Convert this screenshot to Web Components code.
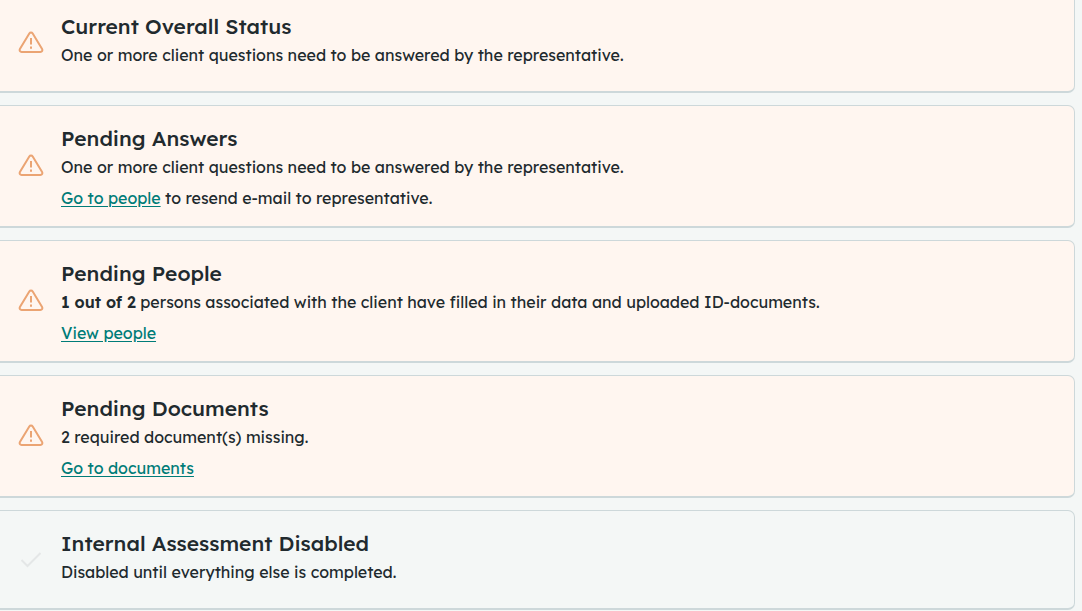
<!DOCTYPE html>
<html lang="en">
<head>
<meta charset="utf-8">
<meta name="viewport" content="width=device-width, initial-scale=1">
<title>Client status</title>
<style>
    body {
        margin: 0;
        background-color: #f4f7f6;
        color: #212a2e;
        font-family: Lexend, Inter, sans-serif;
        font-size: 16px;
        overflow: hidden;
    }
</style>
</head>
<body>
<status-list>
    <status-card heading="Current Overall Status" state="warning">
        <status-text>One or more client questions need to be answered by the representative.</status-text>
    </status-card>
    <status-card heading="Pending Answers" state="warning">
        <status-text>One or more client questions need to be answered by the representative.</status-text>
        <status-text><status-link href="#people">Go to people</status-link> to resend e-mail to representative.</status-text>
    </status-card>
    <status-card heading="Pending People" state="warning">
        <status-text><b>1 out of 2</b> persons associated with the client have filled in their data and uploaded ID-documents.</status-text>
        <status-text><status-link href="#people">View people</status-link></status-text>
    </status-card>
    <status-card heading="Pending Documents" state="warning">
        <status-text>2 required document(s) missing.</status-text>
        <status-text><status-link href="#documents">Go to documents</status-link></status-text>
    </status-card>
    <status-card heading="Internal Assessment Disabled" state="disabled">
        <status-text>Disabled until everything else is completed.</status-text>
    </status-card>
</status-list>
<script>
const ICONS = {
    warning: `
        <svg width="26" height="26" viewBox="0 0 26 26" fill="none" stroke="#eba473" stroke-width="2" stroke-linejoin="round" aria-hidden="true">
            <path d="M11.3 2.500 1.900 18c-.8 1.400.1 3 1.700 3h18.800c1.600 0 2.500-1.600 1.700-3L14.700 2.500c-.8-1.300-2.600-1.300-3.400 0z"/>
            <path d="M13 7v6.500M13 15.500v2.300"/>
        </svg>`,
    disabled: `
        <svg width="26" height="26" viewBox="0 0 26 26" fill="none" stroke="#e4e7e7" stroke-width="2" aria-hidden="true">
            <path d="M3.500 12 9.500 18 22.500 5"/>
        </svg>`,
};

class StatusList extends HTMLElement {
    constructor () {
        super();
        this.root = this.attachShadow({mode: 'open'});
        this.root.innerHTML = `
            <style>
                :host {
                    display: flex;
                    flex-direction: column;
                    gap: 12px;
                    margin-top: -7px;
                    padding-right: 7px;
                }
            </style>
            <slot></slot>
        `;
    }
}

class StatusCard extends HTMLElement {
    constructor () {
        super();
        this.root = this.attachShadow({mode: 'open'});
    }

    connectedCallback () {
        this._render();
    }

    _render () {
        this.root.innerHTML = `
            <style>
                :host {
                    display: flex;
                    align-items: center;
                    gap: 17px;
                    box-sizing: border-box;
                    padding: 18px 18px 16px;
                    border: 1px solid #cdd8da;
                    border-left: 0;
                    border-bottom-width: 2px;
                    border-radius: 0 7px 7px 0;
                }
                :host([state="warning"]) {
                    background-color: #fff6f0;
                }
                svg {
                    display: block;
                    flex: none;
                }
                h2 {
                    margin: 0 0 4px;
                    font-size: 21px;
                    font-weight: 500;
                    line-height: 28px;
                }
            </style>
            ${ICONS[this.getAttribute('state')]}
            <div>
                <h2>${this.getAttribute('heading')}</h2>
                <slot></slot>
            </div>
        `;
    }
}

class StatusText extends HTMLElement {
    constructor () {
        super();
        this.root = this.attachShadow({mode: 'open'});
        this.root.innerHTML = `
            <style>
                :host {
                    display: block;
                    line-height: 23px;
                }
                :host(:first-child) {
                    margin-bottom: 8px;
                }
                ::slotted(b) {
                    font-weight: 600;
                }
            </style>
            <slot></slot>
        `;
    }
}

class StatusLink extends HTMLElement {
    constructor () {
        super();
        this.root = this.attachShadow({mode: 'open'});
    }

    connectedCallback () {
        this.root.innerHTML = `
            <style>
                :host {
                    display: inline;
                }
                a {
                    color: #007c78;
                    text-underline-offset: 2px;
                }
            </style>
            <a href="${this.getAttribute('href')}"><slot></slot></a>
        `;
    }
}

customElements.define('status-list', StatusList);
customElements.define('status-card', StatusCard);
customElements.define('status-text', StatusText);
customElements.define('status-link', StatusLink);
</script>
</body>
</html>
